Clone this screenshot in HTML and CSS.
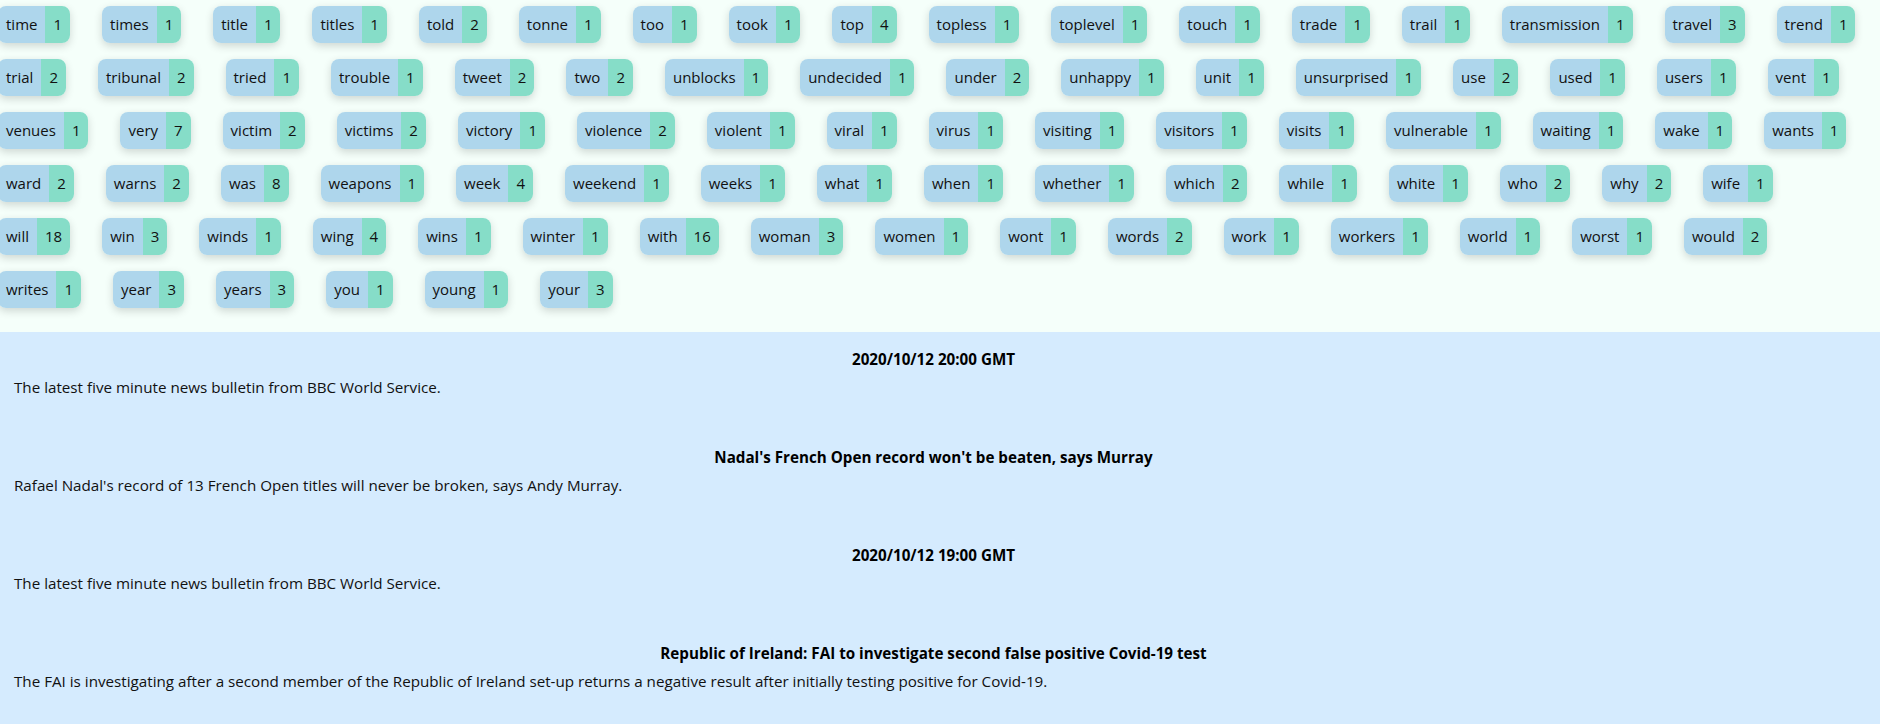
FILE: index.html
```html
<!DOCTYPE html>
<html lang="en">
<head>
<meta charset="utf-8">
<title>Word counts</title>
<link rel="stylesheet" href="styles.css">
</head>
<body>
<section class="tags">
  <div class="tag-row">
    <div class="tag"><span class="word">time</span><span class="count">1</span></div>
    <div class="tag"><span class="word">times</span><span class="count">1</span></div>
    <div class="tag"><span class="word">title</span><span class="count">1</span></div>
    <div class="tag"><span class="word">titles</span><span class="count">1</span></div>
    <div class="tag"><span class="word">told</span><span class="count">2</span></div>
    <div class="tag"><span class="word">tonne</span><span class="count">1</span></div>
    <div class="tag"><span class="word">too</span><span class="count">1</span></div>
    <div class="tag"><span class="word">took</span><span class="count">1</span></div>
    <div class="tag"><span class="word">top</span><span class="count">4</span></div>
    <div class="tag"><span class="word">topless</span><span class="count">1</span></div>
    <div class="tag"><span class="word">toplevel</span><span class="count">1</span></div>
    <div class="tag"><span class="word">touch</span><span class="count">1</span></div>
    <div class="tag"><span class="word">trade</span><span class="count">1</span></div>
    <div class="tag"><span class="word">trail</span><span class="count">1</span></div>
    <div class="tag"><span class="word">transmission</span><span class="count">1</span></div>
    <div class="tag"><span class="word">travel</span><span class="count">3</span></div>
    <div class="tag"><span class="word">trend</span><span class="count">1</span></div>
  </div>
  <div class="tag-row">
    <div class="tag"><span class="word">trial</span><span class="count">2</span></div>
    <div class="tag"><span class="word">tribunal</span><span class="count">2</span></div>
    <div class="tag"><span class="word">tried</span><span class="count">1</span></div>
    <div class="tag"><span class="word">trouble</span><span class="count">1</span></div>
    <div class="tag"><span class="word">tweet</span><span class="count">2</span></div>
    <div class="tag"><span class="word">two</span><span class="count">2</span></div>
    <div class="tag"><span class="word">unblocks</span><span class="count">1</span></div>
    <div class="tag"><span class="word">undecided</span><span class="count">1</span></div>
    <div class="tag"><span class="word">under</span><span class="count">2</span></div>
    <div class="tag"><span class="word">unhappy</span><span class="count">1</span></div>
    <div class="tag"><span class="word">unit</span><span class="count">1</span></div>
    <div class="tag"><span class="word">unsurprised</span><span class="count">1</span></div>
    <div class="tag"><span class="word">use</span><span class="count">2</span></div>
    <div class="tag"><span class="word">used</span><span class="count">1</span></div>
    <div class="tag"><span class="word">users</span><span class="count">1</span></div>
    <div class="tag"><span class="word">vent</span><span class="count">1</span></div>
  </div>
  <div class="tag-row">
    <div class="tag"><span class="word">venues</span><span class="count">1</span></div>
    <div class="tag"><span class="word">very</span><span class="count">7</span></div>
    <div class="tag"><span class="word">victim</span><span class="count">2</span></div>
    <div class="tag"><span class="word">victims</span><span class="count">2</span></div>
    <div class="tag"><span class="word">victory</span><span class="count">1</span></div>
    <div class="tag"><span class="word">violence</span><span class="count">2</span></div>
    <div class="tag"><span class="word">violent</span><span class="count">1</span></div>
    <div class="tag"><span class="word">viral</span><span class="count">1</span></div>
    <div class="tag"><span class="word">virus</span><span class="count">1</span></div>
    <div class="tag"><span class="word">visiting</span><span class="count">1</span></div>
    <div class="tag"><span class="word">visitors</span><span class="count">1</span></div>
    <div class="tag"><span class="word">visits</span><span class="count">1</span></div>
    <div class="tag"><span class="word">vulnerable</span><span class="count">1</span></div>
    <div class="tag"><span class="word">waiting</span><span class="count">1</span></div>
    <div class="tag"><span class="word">wake</span><span class="count">1</span></div>
    <div class="tag"><span class="word">wants</span><span class="count">1</span></div>
  </div>
  <div class="tag-row">
    <div class="tag"><span class="word">ward</span><span class="count">2</span></div>
    <div class="tag"><span class="word">warns</span><span class="count">2</span></div>
    <div class="tag"><span class="word">was</span><span class="count">8</span></div>
    <div class="tag"><span class="word">weapons</span><span class="count">1</span></div>
    <div class="tag"><span class="word">week</span><span class="count">4</span></div>
    <div class="tag"><span class="word">weekend</span><span class="count">1</span></div>
    <div class="tag"><span class="word">weeks</span><span class="count">1</span></div>
    <div class="tag"><span class="word">what</span><span class="count">1</span></div>
    <div class="tag"><span class="word">when</span><span class="count">1</span></div>
    <div class="tag"><span class="word">whether</span><span class="count">1</span></div>
    <div class="tag"><span class="word">which</span><span class="count">2</span></div>
    <div class="tag"><span class="word">while</span><span class="count">1</span></div>
    <div class="tag"><span class="word">white</span><span class="count">1</span></div>
    <div class="tag"><span class="word">who</span><span class="count">2</span></div>
    <div class="tag"><span class="word">why</span><span class="count">2</span></div>
    <div class="tag"><span class="word">wife</span><span class="count">1</span></div>
  </div>
  <div class="tag-row">
    <div class="tag"><span class="word">will</span><span class="count">18</span></div>
    <div class="tag"><span class="word">win</span><span class="count">3</span></div>
    <div class="tag"><span class="word">winds</span><span class="count">1</span></div>
    <div class="tag"><span class="word">wing</span><span class="count">4</span></div>
    <div class="tag"><span class="word">wins</span><span class="count">1</span></div>
    <div class="tag"><span class="word">winter</span><span class="count">1</span></div>
    <div class="tag"><span class="word">with</span><span class="count">16</span></div>
    <div class="tag"><span class="word">woman</span><span class="count">3</span></div>
    <div class="tag"><span class="word">women</span><span class="count">1</span></div>
    <div class="tag"><span class="word">wont</span><span class="count">1</span></div>
    <div class="tag"><span class="word">words</span><span class="count">2</span></div>
    <div class="tag"><span class="word">work</span><span class="count">1</span></div>
    <div class="tag"><span class="word">workers</span><span class="count">1</span></div>
    <div class="tag"><span class="word">world</span><span class="count">1</span></div>
    <div class="tag"><span class="word">worst</span><span class="count">1</span></div>
    <div class="tag"><span class="word">would</span><span class="count">2</span></div>
  </div>
  <div class="tag-row">
    <div class="tag"><span class="word">writes</span><span class="count">1</span></div>
    <div class="tag"><span class="word">year</span><span class="count">3</span></div>
    <div class="tag"><span class="word">years</span><span class="count">3</span></div>
    <div class="tag"><span class="word">you</span><span class="count">1</span></div>
    <div class="tag"><span class="word">young</span><span class="count">1</span></div>
    <div class="tag"><span class="word">your</span><span class="count">3</span></div>
  </div>
</section>
<section class="news">
  <article class="news-item">
    <h4 class="news-title">2020/10/12 20:00 GMT</h4>
    <p class="news-desc">The latest five minute news bulletin from BBC World Service.</p>
  </article>
  <article class="news-item">
    <h4 class="news-title">Nadal's French Open record won't be beaten, says Murray</h4>
    <p class="news-desc">Rafael Nadal's record of 13 French Open titles will never be broken, says Andy Murray.</p>
  </article>
  <article class="news-item">
    <h4 class="news-title">2020/10/12 19:00 GMT</h4>
    <p class="news-desc">The latest five minute news bulletin from BBC World Service.</p>
  </article>
  <article class="news-item">
    <h4 class="news-title">Republic of Ireland: FAI to investigate second false positive Covid-19 test</h4>
    <p class="news-desc">The FAI is investigating after a second member of the Republic of Ireland set-up returns a negative result after initially testing positive for Covid-19.</p>
  </article>
</section>
</body>
</html>
```
FILE: styles.css
```css
html, body {
  margin: 0;
  padding: 0;
}

body {
  background: #f5fffa;
  font-family: "Open Sans", "Noto Sans", sans-serif;
  font-size: 15px;
  line-height: 21px;
  color: #111;
}

.tags {
  display: flex;
  flex-direction: column;
  gap: 16px;
  padding: 6px 0 24px;
  margin-left: -2px;
}

.tag-row {
  display: flex;
  gap: 32px;
}

.tag {
  display: flex;
  flex: none;
  border-radius: 8px;
  overflow: hidden;
  box-shadow: 0 3px 8px rgba(0, 0, 0, 0.16);
}

.word {
  background: #aed6ec;
  padding: 8px;
}

.count {
  background: #86ddc8;
  padding: 8px;
}

.news {
  background: #d5ebfe;
  padding-bottom: 20px;
}

.news-item {
  padding: 17px 27px 32px 14px;
  font-size: 15.2px;
}

.news-title {
  margin: 0 0 7px;
  text-align: center;
  font-size: 15.2px;
  font-weight: 700;
  color: #000;
}

.news-desc {
  margin: 0;
}
```
